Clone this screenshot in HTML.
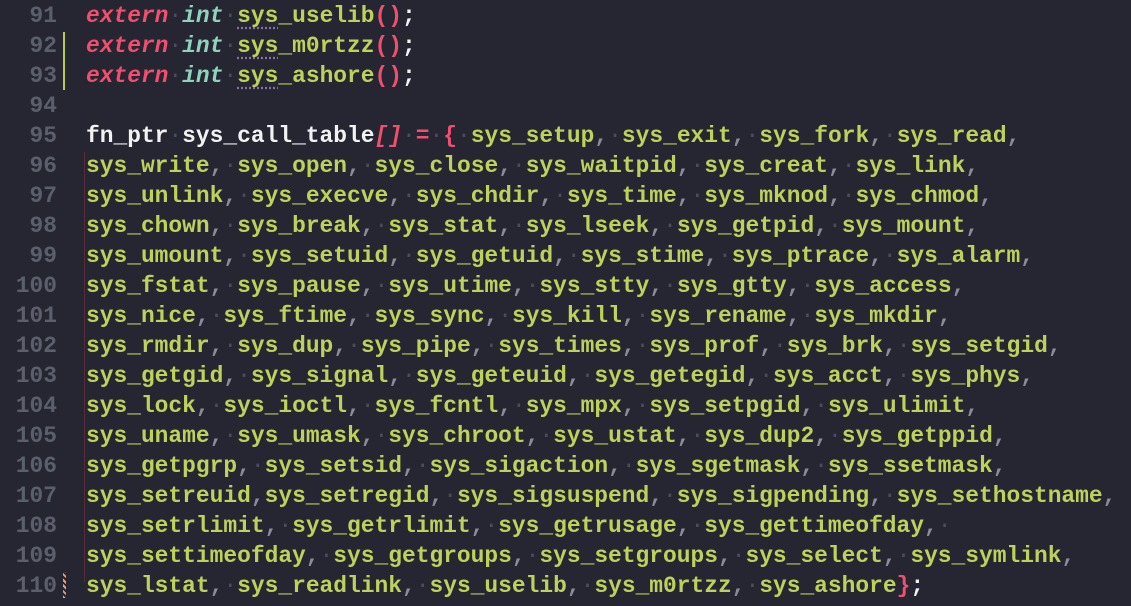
<!DOCTYPE html>
<html><head><meta charset="utf-8"><style>
html,body{margin:0;padding:0;background:#262632;width:1131px;height:606px;overflow:hidden}
body{font-family:"Liberation Mono",monospace;font-size:22.9px;font-weight:bold;position:relative}
.ln{position:absolute;left:0;width:57px;text-align:right;color:#5b5f6c;line-height:30px}
.code{position:absolute;left:86px;top:1px;line-height:30px;white-space:pre;color:#bdd25a}
.k{color:#f0506e;font-style:italic}
.t{color:#8fd3bd;font-style:italic}
.w{color:#f2f2f2}
.p{color:#f0506e}
.d{color:#4a4d5c;font-weight:normal}
.c{color:#8a8d98}
.u{text-decoration:underline dotted #8a6fa0;text-underline-offset:5px}
</style></head><body>
<div class="ln" style="top:1px">91<br>92<br>93<br>94<br>95<br>96<br>97<br>98<br>99<br>100<br>101<br>102<br>103<br>104<br>105<br>106<br>107<br>108<br>109<br>110</div>
<div style="position:absolute;left:63px;top:32px;width:2px;height:58px;background:#b5cd4a"></div>
<div style="position:absolute;left:63px;top:572px;width:3px;height:26px;background:repeating-linear-gradient(45deg,#f0a070 0 2px,#262632 2px 4px)"></div>
<div style="position:absolute;left:84px;top:152px;width:1px;height:430px;background:#5a2a38"></div>
<div class="code"><span class="k">extern</span><span class="d">·</span><span class="t">int</span><span class="d">·</span><span class="u">sys</span>_uselib<span class="p">()</span><span class="w">;</span>
<span class="k">extern</span><span class="d">·</span><span class="t">int</span><span class="d">·</span><span class="u">sys</span>_m0rtzz<span class="p">()</span><span class="w">;</span>
<span class="k">extern</span><span class="d">·</span><span class="t">int</span><span class="d">·</span><span class="u">sys</span>_ashore<span class="p">()</span><span class="w">;</span>

<span class="w">fn_ptr</span><span class="d">·</span><span class="w">sys_call_table</span><span class="p" style="font-style:italic">[]</span><span class="d">·</span><span class="p">=</span><span class="d">·</span><span class="p">{</span><span class="d">·</span>sys_setup<span class="c">,</span><span class="d">·</span>sys_exit<span class="c">,</span><span class="d">·</span>sys_fork<span class="c">,</span><span class="d">·</span>sys_read<span class="c">,</span>
sys_write<span class="c">,</span><span class="d">·</span>sys_open<span class="c">,</span><span class="d">·</span>sys_close<span class="c">,</span><span class="d">·</span>sys_waitpid<span class="c">,</span><span class="d">·</span>sys_creat<span class="c">,</span><span class="d">·</span>sys_link<span class="c">,</span>
sys_unlink<span class="c">,</span><span class="d">·</span>sys_execve<span class="c">,</span><span class="d">·</span>sys_chdir<span class="c">,</span><span class="d">·</span>sys_time<span class="c">,</span><span class="d">·</span>sys_mknod<span class="c">,</span><span class="d">·</span>sys_chmod<span class="c">,</span>
sys_chown<span class="c">,</span><span class="d">·</span>sys_break<span class="c">,</span><span class="d">·</span>sys_stat<span class="c">,</span><span class="d">·</span>sys_lseek<span class="c">,</span><span class="d">·</span>sys_getpid<span class="c">,</span><span class="d">·</span>sys_mount<span class="c">,</span>
sys_umount<span class="c">,</span><span class="d">·</span>sys_setuid<span class="c">,</span><span class="d">·</span>sys_getuid<span class="c">,</span><span class="d">·</span>sys_stime<span class="c">,</span><span class="d">·</span>sys_ptrace<span class="c">,</span><span class="d">·</span>sys_alarm<span class="c">,</span>
sys_fstat<span class="c">,</span><span class="d">·</span>sys_pause<span class="c">,</span><span class="d">·</span>sys_utime<span class="c">,</span><span class="d">·</span>sys_stty<span class="c">,</span><span class="d">·</span>sys_gtty<span class="c">,</span><span class="d">·</span>sys_access<span class="c">,</span>
sys_nice<span class="c">,</span><span class="d">·</span>sys_ftime<span class="c">,</span><span class="d">·</span>sys_sync<span class="c">,</span><span class="d">·</span>sys_kill<span class="c">,</span><span class="d">·</span>sys_rename<span class="c">,</span><span class="d">·</span>sys_mkdir<span class="c">,</span>
sys_rmdir<span class="c">,</span><span class="d">·</span>sys_dup<span class="c">,</span><span class="d">·</span>sys_pipe<span class="c">,</span><span class="d">·</span>sys_times<span class="c">,</span><span class="d">·</span>sys_prof<span class="c">,</span><span class="d">·</span>sys_brk<span class="c">,</span><span class="d">·</span>sys_setgid<span class="c">,</span>
sys_getgid<span class="c">,</span><span class="d">·</span>sys_signal<span class="c">,</span><span class="d">·</span>sys_geteuid<span class="c">,</span><span class="d">·</span>sys_getegid<span class="c">,</span><span class="d">·</span>sys_acct<span class="c">,</span><span class="d">·</span>sys_phys<span class="c">,</span>
sys_lock<span class="c">,</span><span class="d">·</span>sys_ioctl<span class="c">,</span><span class="d">·</span>sys_fcntl<span class="c">,</span><span class="d">·</span>sys_mpx<span class="c">,</span><span class="d">·</span>sys_setpgid<span class="c">,</span><span class="d">·</span>sys_ulimit<span class="c">,</span>
sys_uname<span class="c">,</span><span class="d">·</span>sys_umask<span class="c">,</span><span class="d">·</span>sys_chroot<span class="c">,</span><span class="d">·</span>sys_ustat<span class="c">,</span><span class="d">·</span>sys_dup2<span class="c">,</span><span class="d">·</span>sys_getppid<span class="c">,</span>
sys_getpgrp<span class="c">,</span><span class="d">·</span>sys_setsid<span class="c">,</span><span class="d">·</span>sys_sigaction<span class="c">,</span><span class="d">·</span>sys_sgetmask<span class="c">,</span><span class="d">·</span>sys_ssetmask<span class="c">,</span>
sys_setreuid<span class="c">,</span>sys_setregid<span class="c">,</span><span class="d">·</span>sys_sigsuspend<span class="c">,</span><span class="d">·</span>sys_sigpending<span class="c">,</span><span class="d">·</span>sys_sethostname<span class="c">,</span>
sys_setrlimit<span class="c">,</span><span class="d">·</span>sys_getrlimit<span class="c">,</span><span class="d">·</span>sys_getrusage<span class="c">,</span><span class="d">·</span>sys_gettimeofday<span class="c">,</span><span class="d">·</span>
sys_settimeofday<span class="c">,</span><span class="d">·</span>sys_getgroups<span class="c">,</span><span class="d">·</span>sys_setgroups<span class="c">,</span><span class="d">·</span>sys_select<span class="c">,</span><span class="d">·</span>sys_symlink<span class="c">,</span>
sys_lstat<span class="c">,</span><span class="d">·</span>sys_readlink<span class="c">,</span><span class="d">·</span>sys_uselib<span class="c">,</span><span class="d">·</span>sys_m0rtzz<span class="c">,</span><span class="d">·</span>sys_ashore<span class="p">}</span><span class="w">;</span></div>
</body></html>
